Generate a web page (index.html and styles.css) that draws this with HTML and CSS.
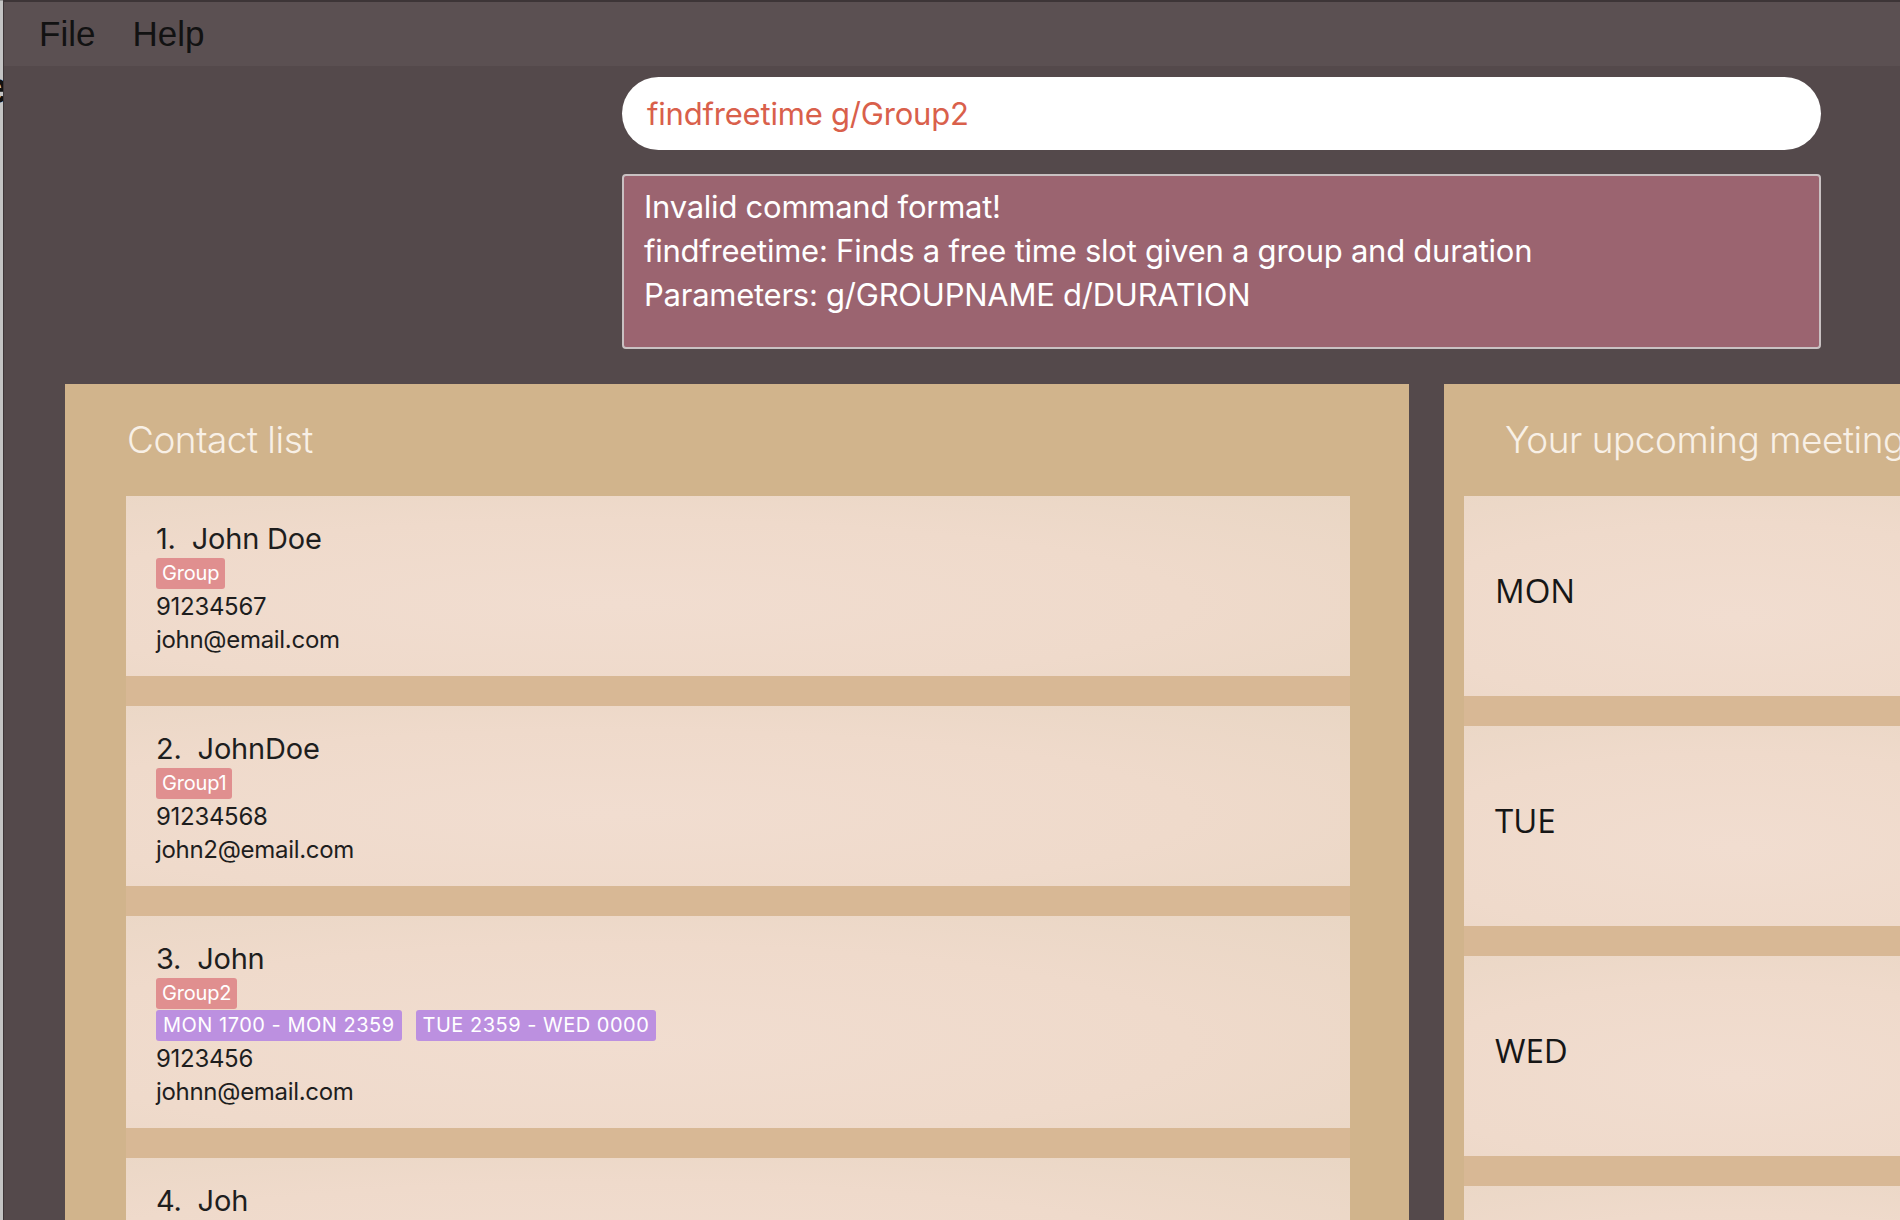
FILE: index.html
```html
<!DOCTYPE html>
<html>
<head>
<meta charset="utf-8">
<link rel="stylesheet" href="styles.css">
</head>
<body>
<div class="edge"><span class="edge-glyph">e</span></div>
<div class="window">
  <div class="menubar">
    <span class="menu-item">File</span>
    <span class="menu-item">Help</span>
  </div>
  <div class="top">
    <div class="command">findfreetime g/Group2</div>
    <div class="result">
      <div>Invalid command format!</div>
      <div>findfreetime: Finds a free time slot given a group and duration</div>
      <div>Parameters: g/GROUPNAME d/DURATION</div>
    </div>
  </div>
  <div class="main">
    <section class="panel contacts">
      <h2 class="panel-title">Contact list</h2>
      <div class="list">
        <div class="card">
          <div class="name">1.&nbsp; John Doe</div>
          <div class="tags"><span class="tag group">Group</span></div>
          <div class="line">91234567</div>
          <div class="line">john@email.com</div>
        </div>
        <div class="card">
          <div class="name">2.&nbsp; JohnDoe</div>
          <div class="tags"><span class="tag group">Group1</span></div>
          <div class="line">91234568</div>
          <div class="line">john2@email.com</div>
        </div>
        <div class="card">
          <div class="name">3.&nbsp; John</div>
          <div class="tags"><span class="tag group">Group2</span></div>
          <div class="tags"><span class="tag time">MON 1700 - MON 2359</span><span class="tag time">TUE 2359 - WED 0000</span></div>
          <div class="line">9123456</div>
          <div class="line">johnn@email.com</div>
        </div>
        <div class="card">
          <div class="name">4.&nbsp; Joh</div>
          <div class="tags"><span class="tag group">Group2</span></div>
          <div class="line">91234</div>
          <div class="line">joh@email.com</div>
        </div>
      </div>
    </section>
    <section class="panel meetings">
      <h2 class="panel-title">Your upcoming meetings</h2>
      <div class="list days">
        <div class="day">MON</div>
        <div class="day">TUE</div>
        <div class="day">WED</div>
        <div class="day">THU</div>
      </div>
    </section>
  </div>
</div>
</body>
</html>
```
FILE: styles.css
```css
html, body {
  margin: 0;
  padding: 0;
  width: 1900px;
  height: 1220px;
  overflow: hidden;
  background: #c4c4c4;
}
body {
  display: flex;
  font-family: Inter, "Liberation Sans", sans-serif;
}
.edge {
  width: 3px;
  flex: none;
  position: relative;
  overflow: hidden;
  background: #c4c4c4;
  border-top: 1px solid #9a9a9a;
}
.edge-glyph {
  position: absolute;
  left: -16px;
  top: 62px;
  font-family: "Liberation Sans", sans-serif;
  font-weight: bold;
  font-size: 44px;
  color: #111;
}
.window {
  flex: 1;
  display: flex;
  flex-direction: column;
  overflow: hidden;
  background: #54494b;
  border-left: 1px solid #3d3537;
  border-top: 2px solid #3d3537;
}
.menubar {
  height: 64px;
  flex: none;
  display: flex;
  align-items: center;
  gap: 37px;
  padding-left: 35px;
  background: #5b5052;
  font-family: "Liberation Sans", sans-serif;
  font-size: 35px;
  color: #121212;
}
.top {
  padding: 11px 79px 0 618px;
  display: flex;
  flex-direction: column;
  gap: 24px;
}
.command {
  height: 73px;
  border-radius: 37px;
  background: #ffffff;
  box-sizing: border-box;
  padding-left: 25px;
  display: flex;
  align-items: center;
  font-size: 31px;
  color: #d9604b;
  letter-spacing: -0.2px;
}
.result {
  height: 175px;
  box-sizing: border-box;
  border: 2px solid #c9c1c2;
  border-radius: 4px;
  background: #9b6470;
  padding: 9px 20px;
  font-size: 31px;
  line-height: 44px;
  color: #ffffff;
  letter-spacing: -0.25px;
}
.main {
  flex: 1;
  min-height: 0;
  display: flex;
  gap: 35px;
  margin-top: 35px;
  padding-left: 61px;
}
.panel {
  flex: none;
  background: #d1b48c;
  display: flex;
  flex-direction: column;
}
.contacts {
  width: 1344px;
  padding: 0 59px 0 61px;
  box-sizing: border-box;
}
.meetings {
  width: 700px;
  padding-left: 20px;
  box-sizing: border-box;
}
.panel-title {
  margin: 0;
  padding: 34px 0 34px 1px;
  font-size: 37px;
  line-height: 44px;
  font-weight: 300;
  color: #f8f0e6;
  letter-spacing: -0.5px;
}
.meetings .panel-title {
  padding-left: 41px;
}
.list {
  display: flex;
  flex-direction: column;
  gap: 30px;
  background: #d8b895;
  flex: 1;
}
.card {
  background: radial-gradient(ellipse at 40% 60%, #f1ddd0 0%, #efdacb 55%, #e9d6c4 100%);
  padding: 26px 30px 20px;
  color: #1e1e1e;
}
.name {
  font-size: 29px;
  line-height: 34px;
  margin-bottom: 2px;
  letter-spacing: -0.2px;
}
.tags {
  display: flex;
  gap: 14px;
  margin-bottom: 1px;
}
.tag {
  height: 31px;
  line-height: 31px;
  padding: 0 6px;
  border-radius: 3px;
  font-size: 20px;
  color: #ffffff;
  letter-spacing: -0.2px;
}
.group {
  background: #e08f8f;
}
.time {
  background: #bc90e0;
  padding: 0 7px;
  letter-spacing: 0.5px;
}
.line {
  font-size: 24px;
  line-height: 33px;
  letter-spacing: -0.3px;
}
.day {
  height: 200px;
  flex: none;
  box-sizing: border-box;
  padding: 0 0 12px 31px;
  display: flex;
  align-items: center;
  background: radial-gradient(ellipse at 40% 60%, #f1ddd0 0%, #efdacb 55%, #e9d6c4 100%);
  font-family: "Open Sans", sans-serif;
  font-size: 33px;
  color: #161616;
}
```
